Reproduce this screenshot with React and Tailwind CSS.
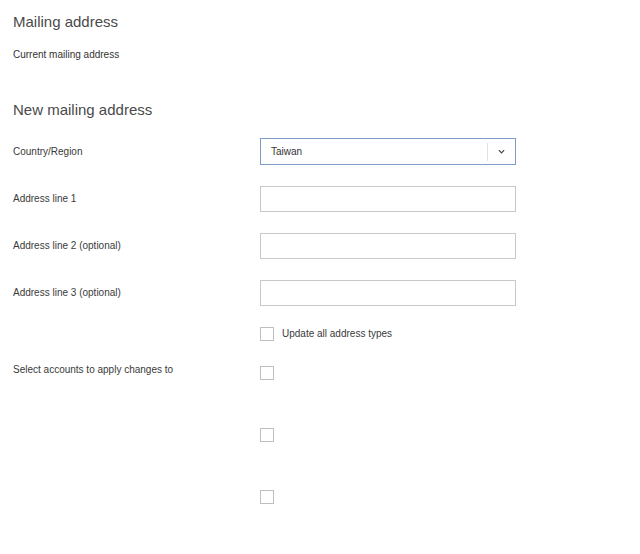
import { useState } from 'react';

const fields = [
  { id: 'line1', label: 'Address line 1' },
  { id: 'line2', label: 'Address line 2 (optional)' },
  { id: 'line3', label: 'Address line 3 (optional)' },
];

function Checkbox({ checked, onChange }) {
  return (
    <button
      type="button"
      onClick={onChange}
      className="w-[14px] h-[14px] border border-[#bfbfbf] bg-white flex items-center justify-center shrink-0"
    >
      {checked && <span className="w-[8px] h-[8px] bg-[#555]" />}
    </button>
  );
}

export default function App() {
  const [form, setForm] = useState({ country: 'Taiwan', line1: '', line2: '', line3: '' });
  const [updateAll, setUpdateAll] = useState(false);
  const [accounts, setAccounts] = useState([false, false, false]);

  const handleChange = (e) => setForm((f) => ({ ...f, [e.target.name]: e.target.value }));

  return (
    <div className="w-[640px] min-h-[554px] bg-white text-[#3a3a3a] font-['Liberation_Sans',Arial,sans-serif]">
      <div className="pl-[13px] pt-[12px]">
        <h2 className="text-[15px] leading-[20px] text-[#4a4a4a]">Mailing address</h2>
        <p className="mt-[16px] text-[10px] leading-[14px] font-medium text-[#333]">Current mailing address</p>
        <h2 className="mt-[38px] text-[15px] leading-[20px] text-[#4a4a4a]">New mailing address</h2>

        {/* form */}
        <div className="mt-[18px] flex flex-col gap-[21px]">
          <div className="flex items-center">
            <label className="w-[247px] text-[10px] leading-[14px]">Country/Region</label>
            <div className="w-[256px] h-[27px] border border-[#7f9cc4] flex items-center">
              <span className="flex-1 pl-[10px] text-[10px] text-[#333]">{form.country}</span>
              <span className="w-px h-[18px] bg-[#e2e2e2]" />
              <span className="w-[27px] flex items-center justify-center">
                <svg viewBox="0 0 8 5" className="w-[7px] h-[5px]" fill="none" stroke="#444" strokeWidth="1.4">
                  <path d="M1 1l3 3 3-3" />
                </svg>
              </span>
            </div>
          </div>

          {fields.map(({ id, label }) => (
            <div key={id} className="flex items-center">
              <label htmlFor={id} className="w-[247px] text-[10px] leading-[14px]">{label}</label>
              <input
                id={id}
                name={id}
                value={form[id]}
                onChange={handleChange}
                className="w-[256px] h-[26px] border border-[#c9c9c9] px-[10px] text-[10px] outline-none"
              />
            </div>
          ))}
        </div>

        <div className="mt-[21px] flex items-center">
          <div className="w-[247px]" />
          <Checkbox checked={updateAll} onChange={() => setUpdateAll((v) => !v)} />
          <span className="ml-[8px] text-[10px] leading-[14px]">Update all address types</span>
        </div>

        <div className="mt-[25px] flex items-start">
          <label className="w-[247px] text-[10px] leading-[14px] -mt-[3px]">Select accounts to apply changes to</label>
          <div className="flex flex-col gap-[48px]">
            {accounts.map((c, i) => (
              <Checkbox
                key={i}
                checked={c}
                onChange={() => setAccounts((a) => a.map((v, j) => (j === i ? !v : v)))}
              />
            ))}
          </div>
        </div>
      </div>
    </div>
  );
}
